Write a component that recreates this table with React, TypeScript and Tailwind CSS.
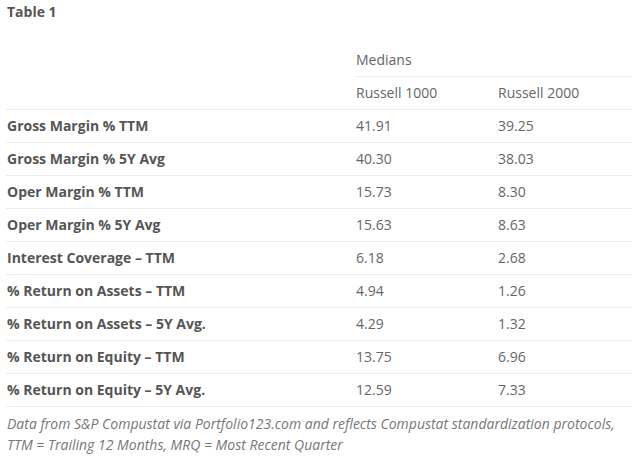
import React from "react";

const rows: [string, string, string][] = [
  ["Gross Margin % TTM", "41.91", "39.25"],
  ["Gross Margin % 5Y Avg", "40.30", "38.03"],
  ["Oper Margin % TTM", "15.73", "8.30"],
  ["Oper Margin % 5Y Avg", "15.63", "8.63"],
  ["Interest Coverage – TTM", "6.18", "2.68"],
  ["% Return on Assets – TTM", "4.94", "1.26"],
  ["% Return on Assets – 5Y Avg.", "4.29", "1.32"],
  ["% Return on Equity – TTM", "13.75", "6.96"],
  ["% Return on Equity – 5Y Avg.", "12.59", "7.33"],
];

const App = () => {
  return (
    <div
      className="min-h-[464px] w-[632px] bg-white pl-[6px] text-[14px] text-[#666]"
      style={{ fontFamily: '"Open Sans", "Liberation Sans", sans-serif' }}
    >
      <div className="flex h-[43px] items-start pl-px pt-[2px] font-bold leading-[20px] text-[#555]">
        Table 1
      </div>
      <table className="w-[626px] table-fixed border-collapse">
        <colgroup>
          <col className="w-[349px]" />
          <col className="w-[142px]" />
          <col />
        </colgroup>
        <thead>
          <tr className="h-[33px]">
            <th />
            <th
              colSpan={2}
              className="border-b border-[#ececec] pl-px text-left font-normal"
            >
              Medians
            </th>
          </tr>
          <tr className="h-[33px] border-b border-[#ececec]">
            <th />
            <th className="pl-px text-left font-normal">Russell 1000</th>
            <th className="pl-px text-left font-normal">Russell 2000</th>
          </tr>
        </thead>
        <tbody>
          {rows.map(([label, a, b]) => (
            <tr key={label} className="h-[33px] border-b border-[#ececec]">
              <td className="pl-px font-bold text-[#555]">{label}</td>
              <td className="pl-px">{a}</td>
              <td className="pl-px">{b}</td>
            </tr>
          ))}
        </tbody>
      </table>
      <p className="border-b border-[#ececec] pb-[9px] pl-px pt-[6px] italic leading-[21px] text-[#777]">
        Data from S&amp;P Compustat via Portfolio123.com and reflects Compustat
        standardization protocols, TTM = Trailing 12 Months, MRQ = Most Recent
        Quarter
      </p>
    </div>
  );
};

export default App;
